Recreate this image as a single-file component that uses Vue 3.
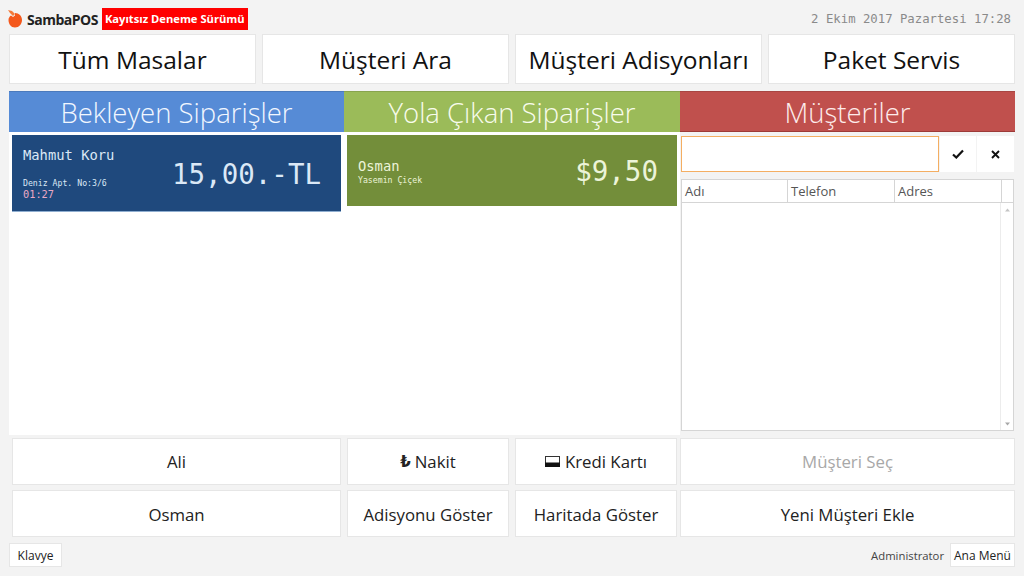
<script setup>
// 배달 화면: 상단 탭, 세 칼럼(대기/배송중/고객), 하단 액션 버튼
const topButtons = ['Tüm Masalar', 'Müşteri Ara', 'Müşteri Adisyonları', 'Paket Servis'];
const columns = ['Adı', 'Telefon', 'Adres'];
</script>

<template>
  <div class="page">
    <header class="topbar">
      <div class="brand">
        <svg class="logo" width="16" height="20" viewBox="0 0 16 20">
          <path d="M1 1 L5 2 L8 5 L6 7 L3 4 Z" fill="#f47a3a" />
          <path d="M8 4 C12 4 15 7 15 11 C15 15 12 18.500 8 18.500 C4 18.500 1.500 15 1.500 11 C1.500 9 2.500 7.500 4 6.500 L6 8 L8 6.500 Z" fill="#f4581c" />
        </svg>
        <span class="brand-name">SambaPOS</span>
        <span class="trial">Kayıtsız Deneme Sürümü</span>
      </div>
      <span class="clock">2 Ekim 2017 Pazartesi 17:28</span>
    </header>

    <nav class="top-nav">
      <button v-for="label in topButtons" :key="label" type="button" class="btn btn--large">{{ label }}</button>
    </nav>

    <section class="board">
      <div class="board-col">
        <h2 class="col-title col-title--blue">Bekleyen Siparişler</h2>
        <div class="order order--blue">
          <div class="order-info">
            <div class="order-name">Mahmut Koru</div>
            <div class="order-sub order-sub--gap">Deniz Apt. No:3/6</div>
            <div class="order-time">01:27</div>
          </div>
          <div class="order-total">15,00.-TL</div>
        </div>
      </div>

      <div class="board-col">
        <h2 class="col-title col-title--green">Yola Çıkan Siparişler</h2>
        <div class="order order--green">
          <div class="order-info">
            <div class="order-name">Osman</div>
            <div class="order-sub order-sub--small">Yasemin Çiçek</div>
          </div>
          <div class="order-total order-total--green">$9,50</div>
        </div>
      </div>

      <div class="board-col board-col--customers">
        <h2 class="col-title col-title--red">Müşteriler</h2>
        <div class="search-row">
          <div class="search-input"></div>
          <button type="button" class="icon-btn" aria-label="Onayla">
            <svg width="12" height="10" viewBox="0 0 12 10"><path d="M1 5.500 L4.300 8.500 L11 1.500" fill="none" stroke="#111" stroke-width="2.200" /></svg>
          </button>
          <button type="button" class="icon-btn" aria-label="Temizle">
            <svg width="9" height="9" viewBox="0 0 9 9"><path d="M1 1 L8 8 M8 1 L1 8" fill="none" stroke="#111" stroke-width="1.900" /></svg>
          </button>
        </div>
        <div class="grid-box">
          <div class="grid-head">
            <span v-for="col in columns" :key="col" class="grid-cell">{{ col }}</span>
            <span class="grid-corner"></span>
          </div>
          <div class="grid-body">
            <div class="scrollbar">
              <svg width="5" height="4" viewBox="0 0 5 4"><path d="M0 3.500 L2.500 0.500 L5 3.500 Z" fill="#c4c4c4" /></svg>
              <svg width="5" height="4" viewBox="0 0 5 4"><path d="M0 0.500 L2.500 3.500 L5 0.500 Z" fill="#a8a8a8" /></svg>
            </div>
          </div>
        </div>
      </div>
    </section>

    <section class="actions">
      <button type="button" class="btn">Ali</button>
      <button type="button" class="btn">
        <span class="lira">₺</span> Nakit
      </button>
      <button type="button" class="btn btn--icon">
        <svg width="15" height="11" viewBox="0 0 15 11">
          <rect x="0.500" y="0.500" width="14" height="10" fill="#fff" stroke="#333" />
          <rect x="0" y="6.500" width="15" height="4.500" fill="#111" />
        </svg>
        Kredi Kartı
      </button>
      <button type="button" class="btn btn--disabled">Müşteri Seç</button>
      <button type="button" class="btn">Osman</button>
      <button type="button" class="btn">Adisyonu Göster</button>
      <button type="button" class="btn">Haritada Göster</button>
      <button type="button" class="btn">Yeni Müşteri Ekle</button>
    </section>

    <footer class="footer">
      <button type="button" class="btn btn--small btn--keyboard">Klavye</button>
      <div class="footer-right">
        <span class="user">Administrator</span>
        <button type="button" class="btn btn--small btn--menu">Ana Menü</button>
      </div>
    </footer>
  </div>
</template>

<style>
html,
body {
  margin: 0;
  background: #f3f3f3;
}
</style>

<style scoped>
.page {
  width: 1024px;
  height: 576px;
  box-sizing: border-box;
  padding: 0 9px;
  overflow: hidden;
  background: #f3f3f3;
  font-family: "Open Sans", "Noto Sans", sans-serif;
  color: #1a1a1a;
}

.topbar {
  height: 34px;
  display: flex;
  align-items: center;
  justify-content: space-between;
  padding-right: 4px;
}

.brand {
  display: flex;
  align-items: center;
  margin-left: -2px;
  padding-top: 3px;
}

.logo {
  margin-right: 4px;
}

.brand-name {
  font-size: 14px;
  font-weight: 700;
  letter-spacing: -0.500px;
  color: #222;
  margin-right: 4px;
  position: relative;
  top: 1px;
}

.trial {
  background: #ff0000;
  color: #fff;
  font-size: 11.200px;
  font-weight: 700;
  line-height: 22px;
  padding: 0 3px;
  white-space: nowrap;
}

.clock {
  font-family: "DejaVu Sans Mono", monospace;
  font-size: 12.300px;
  color: #8a8a8a;
  position: relative;
  top: 2px;
}

.btn {
  display: flex;
  align-items: center;
  justify-content: center;
  box-sizing: border-box;
  padding: 0;
  border: 1px solid #e6e6e6;
  background: #fff;
  color: #222;
  font-family: inherit;
  font-size: 16.800px;
  white-space: nowrap;
}

.top-nav {
  display: grid;
  grid-template-columns: repeat(4, 247px);
  column-gap: 6px;
  height: 50px;
}

.btn--large {
  font-size: 24.500px;
  color: #111;
}

.board {
  display: grid;
  grid-template-columns: 335px 336px 335px;
  height: 344px;
  margin-top: 7px;
}

.board-col {
  background: #fff;
  min-width: 0;
}

.col-title {
  margin: 0;
  height: 41px;
  box-sizing: border-box;
  font-size: 27.500px;
  font-weight: 300;
  line-height: 41px;
  text-align: center;
  white-space: nowrap;
  border-top: 1px solid rgba(0, 0, 0, 0.12);
}

.col-title--blue {
  background: #568bd6;
  color: #f2f7ff;
}

.col-title--green {
  background: #9bbb59;
  color: #f8fcec;
}

.col-title--red {
  background: #c0504d;
  color: #fdeceb;
  border-bottom: 1px solid #9c3a38;
}

.order {
  display: flex;
  justify-content: space-between;
  box-sizing: border-box;
  margin: 3px 3px 0;
  font-family: "DejaVu Sans Mono", monospace;
}

.order--blue {
  height: 77px;
  background: #1f497d;
  color: #dbe8f6;
  padding: 12px 20px 0 11px;
  border-bottom: 1px solid #8faed0;
}

.order--green {
  height: 71px;
  background: #738e3a;
  color: #ecf4d8;
  padding: 0 19px 0 11px;
  align-items: center;
}

.order--green .order-info {
  padding-top: 2px;
}

.order-name {
  font-size: 13.800px;
  line-height: 16px;
}

.order-sub {
  font-size: 8.200px;
  line-height: 12px;
}

.order-sub--gap {
  margin-top: 14px;
}

.order-sub--small {
  line-height: 9px;
  margin-top: 2px;
}

.order-time {
  font-size: 10.300px;
  line-height: 11px;
  color: #eba8c4;
}

.order-total {
  font-size: 27.500px;
  line-height: 34px;
  margin-top: 10px;
}

.order-total--green {
  margin-top: 0;
}

.board-col--customers {
  background: #f3f3f3;
}

.search-row {
  display: grid;
  grid-template-columns: 258px 36px 37px;
  height: 36px;
  margin: 4px 1px 0;
  column-gap: 1px;
}

.search-input {
  background: #fff;
  border: 1px solid #f4ae62;
}

.icon-btn {
  display: flex;
  align-items: center;
  justify-content: center;
  padding: 0;
  border: none;
  background: #fff;
}

.grid-box {
  display: flex;
  flex-direction: column;
  height: 252px;
  box-sizing: border-box;
  margin: 7px 1px 0;
  background: #fff;
  border: 1px solid #d5d5d5;
}

.grid-head {
  display: grid;
  grid-template-columns: 106px 107px 107px 1fr;
  height: 22px;
  border-bottom: 1px solid #d5d5d5;
}

.grid-cell {
  padding-left: 3px;
  font-size: 13px;
  line-height: 23px;
  color: #555;
  border-right: 1px solid #d5d5d5;
}

.grid-corner {
  display: block;
}

.grid-body {
  flex: 1;
  display: flex;
  justify-content: flex-end;
}

.scrollbar {
  width: 12px;
  display: flex;
  flex-direction: column;
  align-items: center;
  justify-content: space-between;
  padding: 5px 0 4px;
  border-left: 1px solid #ececec;
}

.actions {
  display: grid;
  grid-template-columns: 329px 162px 162px 332px;
  grid-template-rows: 47px 47px;
  column-gap: 6px;
  row-gap: 5px;
  margin: 3px 0 0 3px;
}

.actions .btn:nth-child(4),
.actions .btn:nth-child(8) {
  margin-left: -3px;
}

.actions .btn:nth-child(n + 5) {
  padding-top: 1px;
}

.btn--icon {
  gap: 5px;
}

.lira {
  font-family: "DejaVu Sans", sans-serif;
  font-weight: 700;
  font-size: 15px;
  margin-right: 4px;
}

.btn--disabled {
  color: #a8a8a8;
}

.footer {
  display: flex;
  justify-content: space-between;
  align-items: center;
  margin-top: 6px;
}

.btn--small {
  height: 24px;
  font-size: 12px;
}

.btn--keyboard {
  width: 53px;
}

.btn--menu {
  width: 65px;
}

.footer-right {
  display: flex;
  align-items: center;
  gap: 6px;
}

.user {
  font-size: 11.300px;
  color: #444;
}
</style>
